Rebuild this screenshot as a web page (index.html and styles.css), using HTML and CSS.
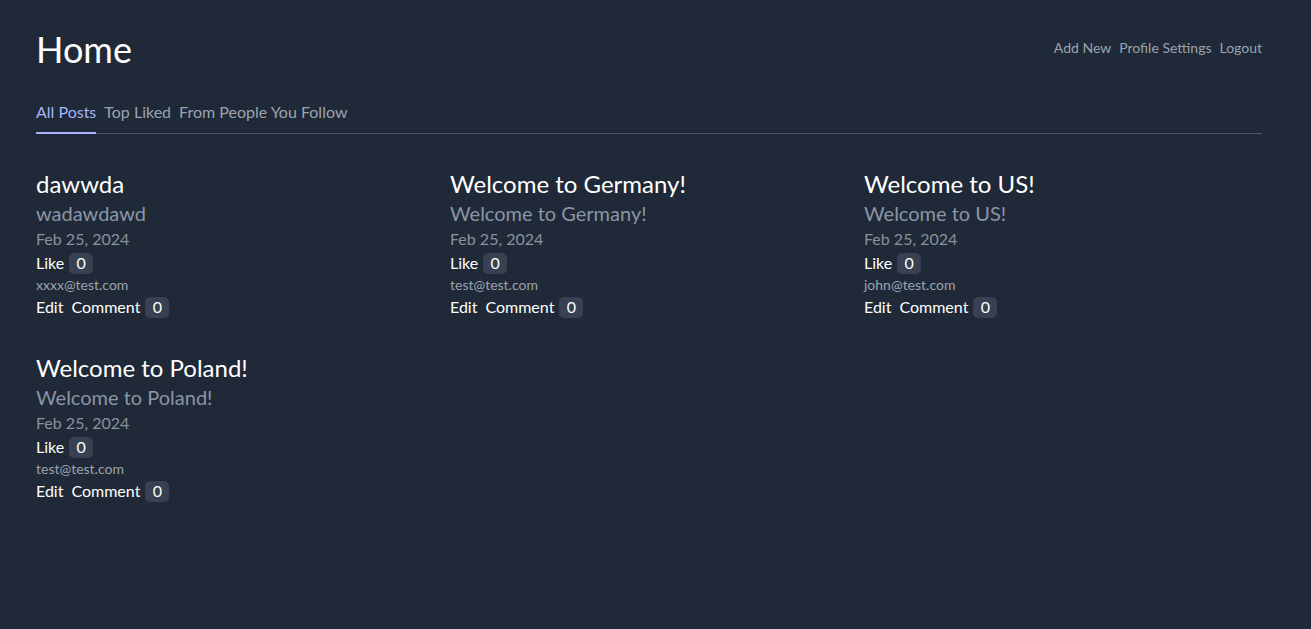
FILE: index.html
```html
<!DOCTYPE html>
<html lang="en">
<head>
<meta charset="utf-8">
<title>Home</title>
<link rel="stylesheet" href="styles.css">
</head>
<body>
<div class="page">
  <header class="header">
    <h1 class="title">Home</h1>
    <nav class="top-nav">
      <a class="top-link" href="#">Add New</a>
      <a class="top-link" href="#">Profile Settings</a>
      <a class="top-link" href="#">Logout</a>
    </nav>
  </header>

  <div class="tabs">
    <a class="tab active" href="#">All Posts</a>
    <a class="tab" href="#">Top Liked</a>
    <a class="tab" href="#">From People You Follow</a>
  </div>

  <main class="posts">
    <article class="post">
      <h2 class="post-title">dawwda</h2>
      <p class="post-body">wadawdawd</p>
      <p class="post-date">Feb 25, 2024</p>
      <div class="row"><span>Like</span><span class="badge">0</span></div>
      <p class="post-author">xxxx@test.com</p>
      <div class="actions"><span>Edit</span><span class="row"><span>Comment</span><span class="badge">0</span></span></div>
    </article>
    <article class="post">
      <h2 class="post-title">Welcome to Germany!</h2>
      <p class="post-body">Welcome to Germany!</p>
      <p class="post-date">Feb 25, 2024</p>
      <div class="row"><span>Like</span><span class="badge">0</span></div>
      <p class="post-author">test@test.com</p>
      <div class="actions"><span>Edit</span><span class="row"><span>Comment</span><span class="badge">0</span></span></div>
    </article>
    <article class="post">
      <h2 class="post-title">Welcome to US!</h2>
      <p class="post-body">Welcome to US!</p>
      <p class="post-date">Feb 25, 2024</p>
      <div class="row"><span>Like</span><span class="badge">0</span></div>
      <p class="post-author">john@test.com</p>
      <div class="actions"><span>Edit</span><span class="row"><span>Comment</span><span class="badge">0</span></span></div>
    </article>
    <article class="post">
      <h2 class="post-title">Welcome to Poland!</h2>
      <p class="post-body">Welcome to Poland!</p>
      <p class="post-date">Feb 25, 2024</p>
      <div class="row"><span>Like</span><span class="badge">0</span></div>
      <p class="post-author">test@test.com</p>
      <div class="actions"><span>Edit</span><span class="row"><span>Comment</span><span class="badge">0</span></span></div>
    </article>
  </main>
</div>
</body>
</html>
```
FILE: styles.css
```css
* { box-sizing: border-box; }

html, body {
  margin: 0;
  background: #1f2937;
}

body {
  font-family: Lato, "Liberation Sans", sans-serif;
  color: #ffffff;
  min-height: 629px;
}

a { text-decoration: none; color: inherit; }

.page {
  padding: 29px 49px 40px 36px;
}

.header {
  display: flex;
  align-items: center;
  justify-content: space-between;
}

.title {
  margin: 0;
  font-size: 36px;
  line-height: 40px;
  font-weight: 400;
  color: #ffffff;
}

.top-nav {
  display: flex;
  gap: 8px;
  margin-top: -2px;
}

.top-link {
  font-size: 14px;
  line-height: 20px;
  color: #9ca3af;
}

.tabs {
  display: flex;
  gap: 8px;
  margin-top: 31px;
  border-bottom: 1px solid #4b5563;
}

.tab {
  font-size: 16px;
  line-height: 24px;
  padding-bottom: 8px;
  border-bottom: 2px solid transparent;
  margin-bottom: -1px;
  color: #9ca3af;
}

.tab.active {
  color: #a5b4fc;
  border-bottom-color: #a5b4fc;
}

.posts {
  display: grid;
  grid-template-columns: repeat(3, 1fr);
  column-gap: 16px;
  row-gap: 33px;
  margin-top: 34px;
}

.post p { margin: 0; }

.post-title {
  margin: 0;
  font-size: 24px;
  line-height: 31px;
  font-weight: 400;
  color: #ffffff;
}

.post-body {
  font-size: 20px;
  line-height: 28px;
  color: #8b95a5;
}

.post-date {
  font-size: 16px;
  line-height: 24px;
  color: #8a929e;
}

.row {
  display: flex;
  align-items: center;
  gap: 5px;
  font-size: 16px;
  line-height: 24px;
  height: 24px;
}

.badge {
  display: inline-flex;
  align-items: center;
  justify-content: center;
  min-width: 24px;
  height: 21px;
  padding: 0 7px;
  border-radius: 5px;
  background: #374151;
  color: #ffffff;
}

.post-author {
  font-size: 14px;
  line-height: 20px;
  color: #9ca3af;
}

.actions {
  display: flex;
  align-items: center;
  gap: 8px;
  font-size: 16px;
  line-height: 24px;
  height: 24px;
}
```
